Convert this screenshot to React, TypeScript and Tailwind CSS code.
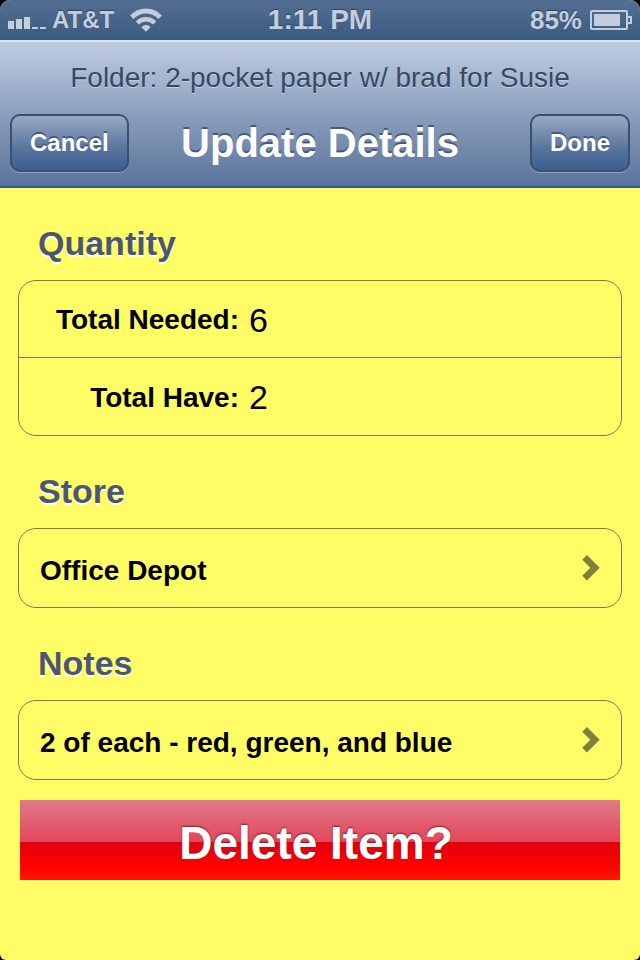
import type { ReactNode } from 'react';

function SignalBars() {
  return (
    <svg width="38" height="14" viewBox="0 0 38 14" fill="#c3cedd" aria-hidden="true">
      <rect x="0" y="6" width="6" height="8" />
      <rect x="8" y="4" width="6" height="10" />
      <rect x="16" y="2" width="6" height="12" />
      <rect x="24" y="12" width="6" height="2" />
      <rect x="32" y="12" width="6" height="2" />
    </svg>
  );
}

function WifiIcon() {
  return (
    <svg width="32" height="24" viewBox="0 0 32 24" fill="none" stroke="#c3cedd" aria-hidden="true">
      <path d="M1.8 9.2C9.6 .8 22.4 .8 30.2 9.2" strokeWidth="5" />
      <path d="M7.4 15c4.8-5 12.4-5 17.2 0" strokeWidth="4.6" />
      <path d="M16 23.8l-4.6-4.6c2.5-2.9 6.7-2.9 9.2 0z" fill="#c3cedd" stroke="none" />
    </svg>
  );
}

function BatteryIcon() {
  return (
    <svg width="42" height="20" viewBox="0 0 42 20" fill="none" stroke="#c3cedd" strokeWidth="2" aria-hidden="true">
      <rect x="1" y="1" width="36" height="18" rx="1" />
      <rect x="4" y="4" width="26" height="12" fill="#c3cedd" stroke="none" />
      <path d="M37 7h4v6h-4" />
    </svg>
  );
}

function Chevron() {
  return (
    <svg width="18" height="26" viewBox="0 0 18 26" fill="none" stroke="#80803a" strokeWidth="6.6" aria-hidden="true">
      <path d="M2.6 2.4L13 12.8 2.6 23.2" />
    </svg>
  );
}

function StatusBar() {
  return (
    <div className="grid h-10 grid-cols-[1fr_auto_1fr] items-center bg-gradient-to-b from-[#546f93] to-[#3b5a80] px-2 text-[26px] leading-10 font-bold text-[#c3cedd] [text-shadow:0_-1px_1px_#2c415f]">
      <div className="flex items-center gap-1.5">
        <div className="pt-1">
          <SignalBars />
        </div>
        <span className="text-2xl">AT&amp;T</span>
        <div className="pl-2.5">
          <WifiIcon />
        </div>
      </div>
      <span className="text-[28px]">1:11 PM</span>
      <div className="flex items-center justify-end gap-2">
        <span>85%</span>
        <BatteryIcon />
      </div>
    </div>
  );
}

function NavButton({ children }: { children: ReactNode }) {
  return (
    <button
      type="button"
      className="h-[58px] rounded-[10px] border-2 border-[#3d4f6e] bg-gradient-to-b from-[#98a9c3] via-[#58759d] via-60% to-[#3d5e90] px-[18px] text-2xl font-bold text-white shadow-[0_1px_0_#8fa3c0] [text-shadow:0_-2px_0_#48587a]"
    >
      {children}
    </button>
  );
}

function Header() {
  return (
    <header className="border-t-2 border-b-2 border-t-[#d9e2ee] border-b-[#3b5a88] bg-gradient-to-b from-[#bfcde0] to-[#5a739a]">
      <p className="pt-4 text-center text-[28px] leading-10 text-[#354966] [text-shadow:0_1px_0_#c6d1e0]">
        Folder: 2-pocket paper w/ brad for Susie
      </p>
      <div className="grid grid-cols-[1fr_auto_1fr] items-center px-2.5 pt-4 pb-3.5">
        <div className="flex justify-start">
          <NavButton>Cancel</NavButton>
        </div>
        <h1 className="text-[40px] leading-[58px] font-bold text-white [text-shadow:0_-2px_0_#48587a]">Update Details</h1>
        <div className="flex justify-end">
          <NavButton>Done</NavButton>
        </div>
      </div>
    </header>
  );
}

function Section({ title, children }: { title: string; children: ReactNode }) {
  return (
    <section>
      <h2 className="px-5 pt-[35px] pb-[17px] text-[34px] leading-10 font-bold text-[#4c566c] [text-shadow:0_2px_0_#ffffff]">
        {title}
      </h2>
      <div className="overflow-hidden rounded-[18px] border border-[#7b7b62]">{children}</div>
    </section>
  );
}

function QuantityRow({ id, label, value }: { id: string; label: string; value: string }) {
  return (
    <div className="flex h-[77px] items-center gap-2.5 pt-0.5">
      <label htmlFor={id} className="w-[220px] text-right text-[28px] font-bold">
        {label}
      </label>
      <input id={id} inputMode="numeric" defaultValue={value} className="min-w-0 flex-1 bg-transparent text-[34px] outline-none" />
    </div>
  );
}

function LinkRow({ children }: { children: ReactNode }) {
  return (
    <button type="button" className="flex h-[78px] w-full items-center justify-between px-[21px] text-left text-[28px] font-bold">
      <span className="pt-1.5">{children}</span>
      <Chevron />
    </button>
  );
}

export default function App() {
  return (
    <div className="min-h-screen bg-black font-['Liberation_Sans',Arial,sans-serif]">
      <div className="min-h-screen overflow-hidden rounded-t-[10px] rounded-b-[6px] bg-[#fffd66] text-black">
        <StatusBar />
        <Header />
        <main className="px-[18px] pb-10">
          <Section title="Quantity">
            <div className="divide-y divide-[#7b7b62]">
              <QuantityRow id="needed" label="Total Needed:" value="6" />
              <QuantityRow id="have" label="Total Have:" value="2" />
            </div>
          </Section>
          <Section title="Store">
            <LinkRow>Office Depot</LinkRow>
          </Section>
          <Section title="Notes">
            <LinkRow>2 of each - red, green, and blue</LinkRow>
          </Section>
          <div className="px-0.5 pt-5">
            <button
              type="button"
              className="h-20 w-full bg-[linear-gradient(to_bottom,#e07a8a_0%,#e4475a_52%,#e0000f_53%,#ff0000_82%,#ff1408_100%)] pt-1.5 pr-2 text-[46px] font-bold text-white [text-shadow:0_-1px_2px_#7a2030]"
            >
              Delete Item?
            </button>
          </div>
        </main>
      </div>
    </div>
  );
}
